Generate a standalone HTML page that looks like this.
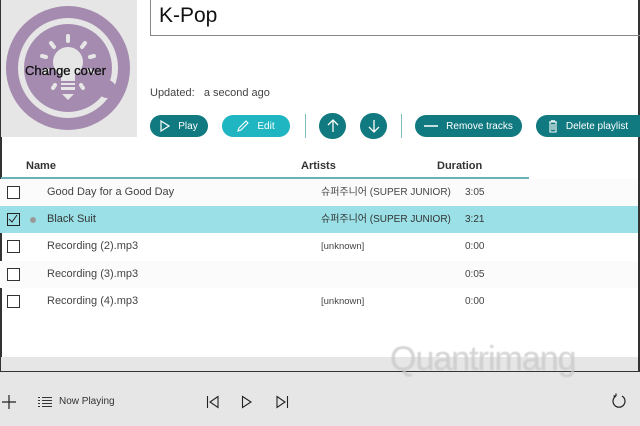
<!DOCTYPE html>
<html><head><meta charset="utf-8"><style>
*{margin:0;padding:0;box-sizing:border-box}
body{width:640px;height:426px;overflow:hidden;background:#fff;font-family:"Liberation Sans","Noto Sans CJK KR",sans-serif;position:relative;color:#222}
.a{position:absolute}
.btn{position:absolute;top:115px;height:22px;border-radius:11px;color:#fff;font-size:10px;display:flex;align-items:center;justify-content:center;gap:8px}
.dk{background:#117a80}.lt{background:#1fb6c1}
.row{position:absolute;left:0;width:638px;height:27px;font-size:11px;color:#444}
.row span{position:absolute;top:7px;line-height:13px;height:13px}
.cb{position:absolute;left:7px;top:7px;width:13px;height:13px;border:1.5px solid #333;background:#fff}
.sep{position:absolute;top:114px;width:1px;height:24px;background:#7dbcc0}
</style></head><body>
<div class="a" style="left:0;top:0;width:1.5px;height:426px;background:#333"></div>
<div class="a" style="left:638px;top:0;width:2px;height:371px;background:#333"></div>
<div class="a" style="left:1px;top:0;width:136px;height:137px;background:#e6e6e6"></div>
<svg class="a" style="left:0;top:0" width="137" height="137">
<circle cx="68" cy="68" r="62" fill="#a58bb0"/>
<circle cx="68" cy="68" r="50" fill="#e6e6e6"/>
<circle cx="68" cy="68" r="44" fill="#a58bb0"/>
<circle cx="107" cy="89" r="9" fill="#a58bb0"/>
<circle cx="68" cy="62" r="15" fill="#e6e6e6"/>
<rect x="61" y="70" width="14" height="20" fill="#e6e6e6"/>
<g stroke="#a58bb0" stroke-width="2"><line x1="60" y1="86" x2="76" y2="86"/><line x1="60" y1="82" x2="76" y2="82"/></g>
<polygon points="62,94 74,94 68,100" fill="#e6e6e6"/>
<g stroke="#e6e6e6" stroke-width="4" stroke-linecap="round"><line x1="68" y1="36" x2="68" y2="41"/><line x1="51" y1="43" x2="54" y2="47"/><line x1="85" y1="43" x2="82" y2="47"/><line x1="42" y1="56" x2="46" y2="57"/><line x1="94" y1="56" x2="90" y2="57"/><line x1="44" y1="72" x2="47" y2="70"/><line x1="92" y1="72" x2="89" y2="70"/><line x1="55" y1="85" x2="53" y2="88"/><line x1="81" y1="85" x2="83" y2="88"/></g>
</svg>
<div class="a" style="left:25px;top:63px;font-size:13px;color:#111;-webkit-text-stroke:0.3px #111">Change cover</div>
<div class="a" style="left:150px;top:0;width:492px;height:36px;border:1px solid #888;border-top:none;font-size:21px;padding:4px 0 0 8px;color:#111">K-Pop</div>
<div class="a" style="left:150px;top:87px;font-size:11px;color:#444">Updated:&nbsp;&nbsp; a second ago</div>
<div class="btn dk" style="left:150px;width:58px"><svg width="10" height="12"><path d="M1 1 L9 6 L1 11Z" fill="none" stroke="#fff" stroke-width="1.2"/></svg>Play</div>
<div class="btn lt" style="left:222px;width:68px"><svg width="12" height="12"><path d="M1 11 L2 8 L9 1 L11 3 L4 10Z" fill="none" stroke="#fff" stroke-width="1.1"/></svg>Edit</div>
<div class="sep" style="left:305px"></div>
<div class="btn dk" style="left:319px;width:27px;height:26px;top:113px;border-radius:13px"><svg width="12" height="14"><path d="M6 13V1M1 6L6 1L11 6" fill="none" stroke="#fff" stroke-width="1.3"/></svg></div>
<div class="btn dk" style="left:360px;width:27px;height:26px;top:113px;border-radius:13px"><svg width="12" height="14"><path d="M6 1V13M1 8L6 13L11 8" fill="none" stroke="#fff" stroke-width="1.3"/></svg></div>
<div class="sep" style="left:401px"></div>
<div class="btn dk" style="left:415px;width:107px"><svg width="14" height="4"><line x1="0" y1="2" x2="14" y2="2" stroke="#fff" stroke-width="1.5"/></svg>Remove tracks</div>
<div class="btn dk" style="left:536px;width:104px;border-radius:11px 0 0 11px"><svg width="10" height="13"><path d="M1 2H9M3.5 2V0.8H6.5V2M2 2.5V12H8V2.5M4 4V10M6 4V10" fill="none" stroke="#fff" stroke-width="1.1"/></svg>Delete playlist</div>
<div class="a" style="left:26px;top:160px;font-size:11px;font-weight:bold;color:#333">Name</div>
<div class="a" style="left:301px;top:160px;font-size:11px;font-weight:bold;color:#333">Artists</div>
<div class="a" style="left:437px;top:160px;font-size:11px;font-weight:bold;color:#333">Duration</div>
<div class="a" style="left:1px;top:177px;width:528px;height:1.5px;background:#6bb2b6"></div>
<div class="row" style="top:179px;background:#fbfbfb"><div class="cb"></div><span style="left:47px">Good Day for a Good Day</span><span style="left:321px;font-size:10px">슈퍼주니어 (SUPER JUNIOR)</span><span style="left:465px;font-size:10px">3:05</span></div>
<div class="row" style="top:206px;background:#9ae0e6;color:#333"><div class="cb" style="border-color:#222;background:#9ae0e6"><svg width="10" height="10" style="position:absolute;left:0;top:0"><path d="M1 5L4 8L9 1" fill="none" stroke="#222" stroke-width="1"/></svg></div><div class="a" style="left:30px;top:11px;width:6px;height:6px;border-radius:3px;background:#999"></div><span style="left:47px">Black Suit</span><span style="left:321px;font-size:10px">슈퍼주니어 (SUPER JUNIOR)</span><span style="left:465px;font-size:10px">3:21</span></div>
<div class="row" style="top:233px"><div class="cb"></div><span style="left:47px">Recording (2).mp3</span><span style="left:321px;font-size:9.5px">[unknown]</span><span style="left:465px;font-size:10px">0:00</span></div>
<div class="row" style="top:261px;background:#fbfbfb"><div class="cb"></div><span style="left:47px">Recording (3).mp3</span><span style="left:465px;font-size:10px">0:05</span></div>
<div class="row" style="top:288px"><div class="cb"></div><span style="left:47px">Recording (4).mp3</span><span style="left:321px;font-size:9.5px">[unknown]</span><span style="left:465px;font-size:10px">0:00</span></div>
<div class="a" style="left:1px;top:357px;width:637px;height:14px;background:#e6e6e6"></div>
<div class="a" style="left:0;top:371px;width:640px;height:55px;background:#e6e6e6;border-top:1.5px solid #333"></div>
<svg class="a" style="left:1px;top:394px" width="16" height="16"><path d="M8 1V15M1 8H15" stroke="#222" stroke-width="1.2"/></svg>
<svg class="a" style="left:38px;top:396px" width="14" height="12"><path d="M0 1.5H2M4 1.5H14M0 4.5H2M4 4.5H14M0 7.5H2M4 7.5H14M0 10.5H2M4 10.5H14" stroke="#333" stroke-width="1"/></svg>
<div class="a" style="left:59px;top:396px;font-size:10px;color:#333">Now Playing</div>
<svg class="a" style="left:206px;top:395px" width="14" height="14"><path d="M1.5 1V13M12 1.5L4 7L12 12.5Z" fill="none" stroke="#222" stroke-width="1.1"/></svg>
<svg class="a" style="left:241px;top:395px" width="12" height="14"><path d="M1.5 1.5L10 7L1.5 12.5Z" fill="none" stroke="#222" stroke-width="1.1"/></svg>
<svg class="a" style="left:275px;top:395px" width="14" height="14"><path d="M12.5 1V13M2 1.5L10 7L2 12.5Z" fill="none" stroke="#222" stroke-width="1.1"/></svg>
<svg class="a" style="left:611px;top:393px" width="16" height="16"><path d="M5 3A6 6 0 1 0 11 3M5 3L5 0.5M5 3L2.5 3" fill="none" stroke="#222" stroke-width="1.2"/></svg>
<div class="a" style="left:390px;top:340px;font-size:34px;color:rgba(255,255,255,0.35);letter-spacing:-1px;text-shadow:0 0 1px rgba(150,150,150,0.6)">Quantrimang</div>
</body></html>
